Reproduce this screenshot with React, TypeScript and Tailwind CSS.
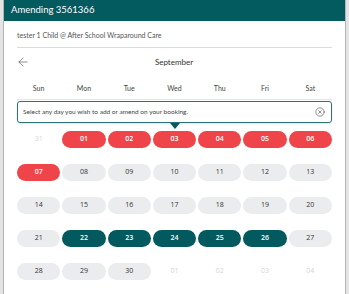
import { ArrowLeft, CircleX } from 'lucide-react'

type Day = { n: string; kind: 'faded' | 'red' | 'gray' | 'teal' }

const DAYS_HEADER = ['Sun', 'Mon', 'Tue', 'Wed', 'Thu', 'Fri', 'Sat']

const weeks: Day[][] = [
  [
    { n: '31', kind: 'faded' },
    { n: '01', kind: 'red' },
    { n: '02', kind: 'red' },
    { n: '03', kind: 'red' },
    { n: '04', kind: 'red' },
    { n: '05', kind: 'red' },
    { n: '06', kind: 'red' },
  ],
  [
    { n: '07', kind: 'red' },
    { n: '08', kind: 'gray' },
    { n: '09', kind: 'gray' },
    { n: '10', kind: 'gray' },
    { n: '11', kind: 'gray' },
    { n: '12', kind: 'gray' },
    { n: '13', kind: 'gray' },
  ],
  ['14', '15', '16', '17', '18', '19', '20'].map(n => ({ n, kind: 'gray' as const })),
  [
    { n: '21', kind: 'gray' },
    { n: '22', kind: 'teal' },
    { n: '23', kind: 'teal' },
    { n: '24', kind: 'teal' },
    { n: '25', kind: 'teal' },
    { n: '26', kind: 'teal' },
    { n: '27', kind: 'gray' },
  ],
  [
    { n: '28', kind: 'gray' },
    { n: '29', kind: 'gray' },
    { n: '30', kind: 'gray' },
    { n: '01', kind: 'faded' },
    { n: '02', kind: 'faded' },
    { n: '03', kind: 'faded' },
    { n: '04', kind: 'faded' },
  ],
]

const pillClass = {
  faded: 'text-[#d4d4d4] font-normal',
  red: 'bg-[#ee444a] text-white font-semibold',
  gray: 'bg-[#ebecee] text-[#333] font-medium',
  teal: 'bg-[#035a5e] text-white font-semibold',
}

export default function App() {
  return (
    <div className="h-[294px] w-[349px] overflow-hidden bg-[#e4e4e4] px-[3px] font-[family-name:Lato,sans-serif]">
      <div className="h-full bg-white border-x border-[#b5b5b5]">
        <div className="h-[21px] bg-[#035a5f] flex items-center px-[7px] text-[9.5px] text-white">Amending 3561366</div>
        <div className="px-[13px]">
          <div className="pt-[8px] pb-[6px] border-b border-[#d3dede] text-[7px] leading-[12px] text-[#555]">tester 1 Child @ After School Wraparound Care</div>

          <div className="mt-[8px] h-[12px] flex items-center">
            <ArrowLeft size={14} strokeWidth={1} className="text-[#444] -ml-[1px]" />
            <div className="flex-1 text-center text-[8px] text-[#333] -ml-[14px]">September</div>
          </div>

          <div className="mt-[14px] pb-[5px] border-b border-[#e3e5e6] grid grid-cols-7 gap-x-[2px]">
            {DAYS_HEADER.map(d => (
              <div key={d} className="text-center text-[7px] leading-[12px] text-[#444]">{d}</div>
            ))}
          </div>

          <div className="relative mt-[1px]">
            <div className="h-[22px] border border-[#2c7275] rounded-[3px] flex items-center justify-between pl-[5px] pr-[6px] shadow-[0_1px_2px_rgba(0,0,0,0.12)]">
              <span className="text-[6.5px] text-[#444]">Select any day you wish to add or amend on your booking.</span>
              <CircleX size={10} strokeWidth={1.4} className="text-[#444]" />
            </div>
            <div className="absolute left-[153px] top-[22px] w-0 h-0 border-x-[5px] border-x-transparent border-t-[6px] border-t-[#035a5e]" />
          </div>

          <div className="mt-[8px] flex flex-col gap-y-[16px] font-[family-name:'Open_Sans',sans-serif]">
            {weeks.map((week, i) => (
              <div key={i} className="grid grid-cols-7 gap-x-[2px]">
                {week.map((d, j) => (
                  <div key={j} className={`h-[17px] rounded-full flex items-center justify-center text-[7px] ${pillClass[d.kind]}`}>{d.n}</div>
                ))}
              </div>
            ))}
          </div>

          <div className="mt-[15px] mx-[8px] border-t border-[#b9bfc2]" />
        </div>
      </div>
    </div>
  )
}
